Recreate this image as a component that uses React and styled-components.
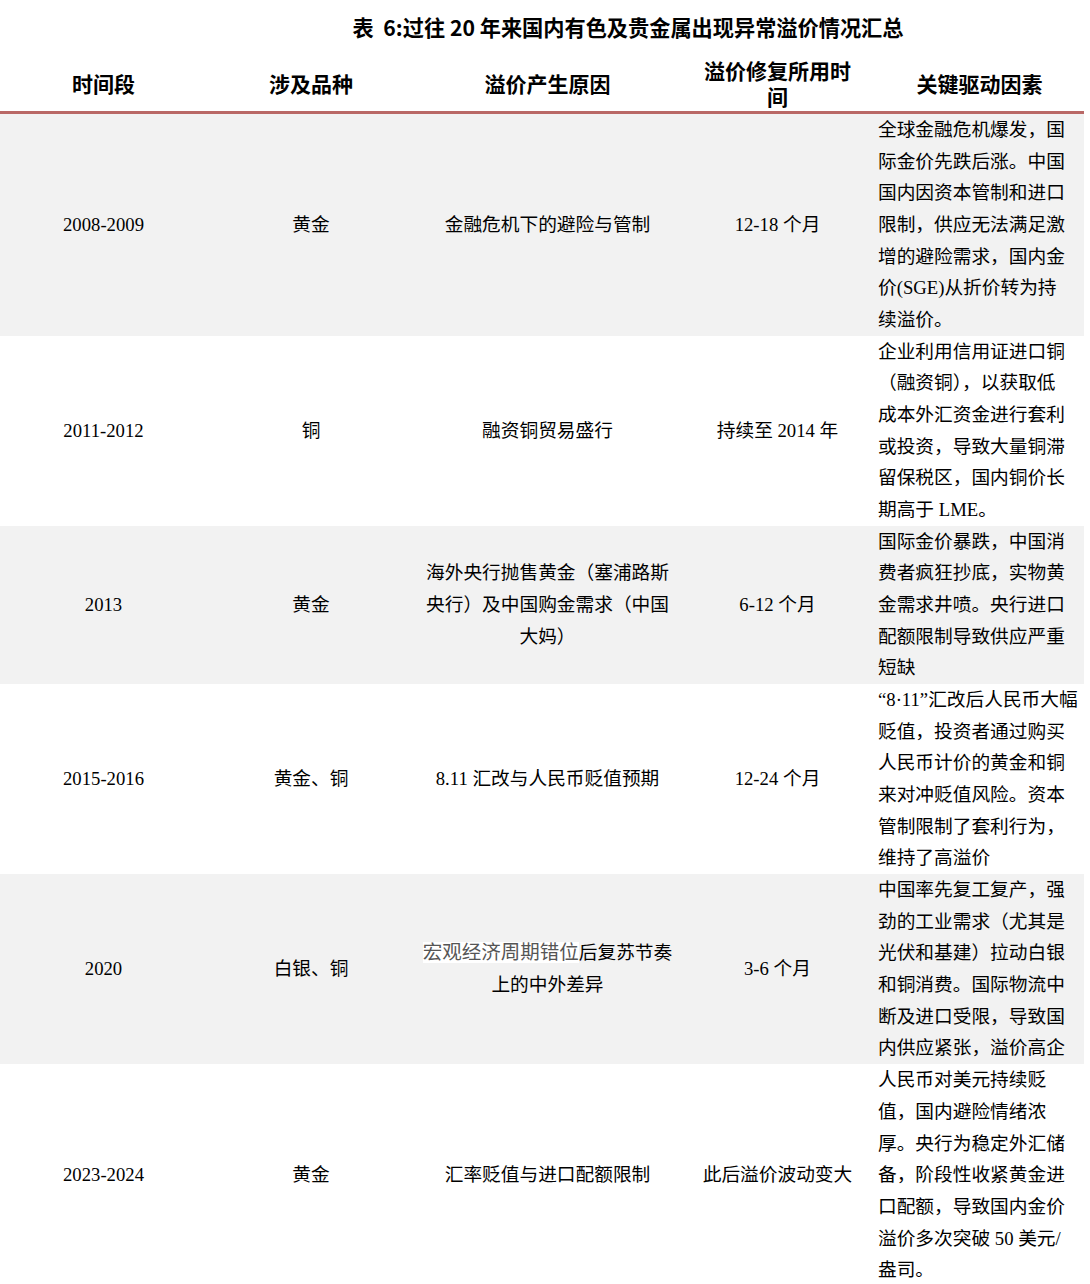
import React from "react";
import styled, { createGlobalStyle } from "styled-components";

const Global = createGlobalStyle`
  html, body { margin: 0; padding: 0; background: #ffffff; }
  body { width: 1090px; }
`;

const Page = styled.div`
  width: 1084px;
`;

const Title = styled.h1`
  margin: 0;
  height: 55px;
  line-height: 54px;
  padding-left: 172px;
  text-align: center;
  font-family: "Noto Sans CJK SC", "Noto Sans", sans-serif;
  font-weight: 700;
  font-size: 21.2px;
  color: #000;
  white-space: pre;
`;

const Table = styled.table`
  width: 1084px;
  border-collapse: collapse;
  table-layout: fixed;
`;

const HeadCell = styled.th`
  height: 56px;
  padding: 0 16px;
  font-family: "Noto Sans CJK SC", "Noto Sans", sans-serif;
  font-weight: 700;
  font-size: 21px;
  line-height: 26px;
  color: #000;
  text-align: center;
  vertical-align: middle;
  border-bottom: 3px solid #b96866;
`;

const Row = styled.tr`
  background: ${(p) => (p.$shaded ? "#f2f2f2" : "#ffffff")};
`;

const Cell = styled.td`
  padding: ${(p) => (p.$left ? "0 4px 0 3px" : "0 5px")};
  font-family: "Liberation Serif", "Noto Sans CJK SC", serif;
  font-size: 18.7px;
  line-height: 31.67px;
  color: #000;
  text-align: ${(p) => (p.$left ? "left" : "center")};
  vertical-align: middle;
`;

const Line = styled.span`
  display: block;
  white-space: nowrap;
`;

const Muted = styled.span`
  background: #ffffff;
  color: #555555;
  font-size: 19.5px;
  line-height: 26px;
`;

const cols = [207, 208, 265, 195, 209];

const headers = ["时间段", "涉及品种", "溢价产生原因", "溢价修复所用时间", "关键驱动因素"];

const rows = [
  {
    period: "2008-2009",
    kind: "黄金",
    reason: "金融危机下的避险与管制",
    time: "12-18 个月",
    driver: [
      "全球金融危机爆发，国",
      "际金价先跌后涨。中国",
      "国内因资本管制和进口",
      "限制，供应无法满足激",
      "增的避险需求，国内金",
      "价(SGE)从折价转为持",
      "续溢价。",
    ],
  },
  {
    period: "2011-2012",
    kind: "铜",
    reason: "融资铜贸易盛行",
    time: "持续至 2014 年",
    driver: [
      "企业利用信用证进口铜",
      "（融资铜），以获取低",
      "成本外汇资金进行套利",
      "或投资，导致大量铜滞",
      "留保税区，国内铜价长",
      "期高于 LME。",
    ],
  },
  {
    period: "2013",
    kind: "黄金",
    reason: "海外央行抛售黄金（塞浦路斯央行）及中国购金需求（中国大妈）",
    time: "6-12 个月",
    driver: [
      "国际金价暴跌，中国消",
      "费者疯狂抄底，实物黄",
      "金需求井喷。央行进口",
      "配额限制导致供应严重",
      "短缺",
    ],
  },
  {
    period: "2015-2016",
    kind: "黄金、铜",
    reason: "8.11 汇改与人民币贬值预期",
    time: "12-24 个月",
    driver: [
      "“8·11”汇改后人民币大幅",
      "贬值，投资者通过购买",
      "人民币计价的黄金和铜",
      "来对冲贬值风险。资本",
      "管制限制了套利行为，",
      "维持了高溢价",
    ],
  },
  {
    period: "2020",
    kind: "白银、铜",
    reason: (
      <>
        <Muted>宏观经济周期错位</Muted>后复苏节奏上的中外差异
      </>
    ),
    time: "3-6 个月",
    driver: [
      "中国率先复工复产，强",
      "劲的工业需求（尤其是",
      "光伏和基建）拉动白银",
      "和铜消费。国际物流中",
      "断及进口受限，导致国",
      "内供应紧张，溢价高企",
    ],
  },
  {
    period: "2023-2024",
    kind: "黄金",
    reason: "汇率贬值与进口配额限制",
    time: "此后溢价波动变大",
    driver: [
      "人民币对美元持续贬",
      "值，国内避险情绪浓",
      "厚。央行为稳定外汇储",
      "备，阶段性收紧黄金进",
      "口配额，导致国内金价",
      "溢价多次突破 50 美元/",
      "盎司。",
    ],
  },
];

export default function App() {
  return (
    <Page>
      <Global />
      <Title>{"表  6:过往 20 年来国内有色及贵金属出现异常溢价情况汇总"}</Title>
      <Table>
        <colgroup>
          {cols.map((w, i) => (
            <col key={i} style={{ width: w }} />
          ))}
        </colgroup>
        <thead>
          <tr>
            {headers.map((h) => (
              <HeadCell key={h}>{h}</HeadCell>
            ))}
          </tr>
        </thead>
        <tbody>
          {rows.map((r, i) => (
            <Row key={i} $shaded={i % 2 === 0}>
              <Cell>{r.period}</Cell>
              <Cell>{r.kind}</Cell>
              <Cell>{r.reason}</Cell>
              <Cell>{r.time}</Cell>
              <Cell $left>
                {r.driver.map((l, j) => (
                  <Line key={j}>{l}</Line>
                ))}
              </Cell>
            </Row>
          ))}
        </tbody>
      </Table>
    </Page>
  );
}
